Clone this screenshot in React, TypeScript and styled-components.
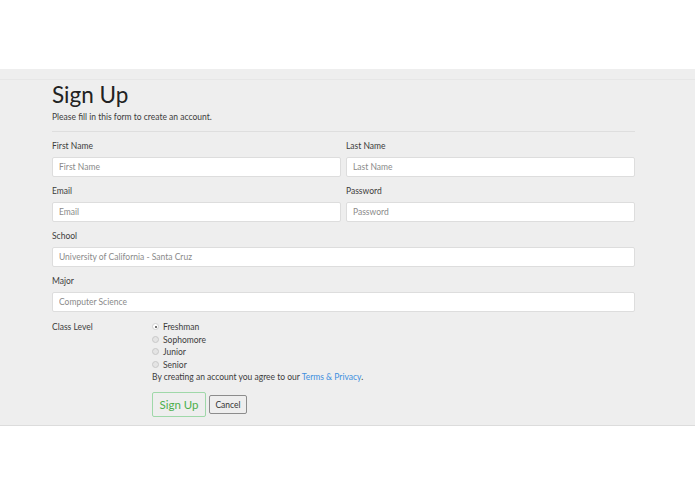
import React from "react";
import styled, { createGlobalStyle } from "styled-components";

const Global = createGlobalStyle`
  html, body { margin: 0; padding: 0; background: #fff; }
  body { font-family: Lato, "Open Sans", "Liberation Sans", sans-serif; color: #333; }
  * { box-sizing: border-box; }
`;

const Band = styled.section`
  margin-top: 69px;
  background: #eeeeee;
  padding-top: 10px;
  border-bottom: 1px solid #dcdcdc;
`;

const Inner = styled.div`
  border-top: 1px solid #e6e6e6;
  padding: 0 60px 8px 52px;
`;

const Form = styled.form`
  width: 583px;
  display: flex;
  flex-direction: column;
`;

const Title = styled.h1`
  margin: 0;
  font-size: 22.5px;
  font-weight: 400;
  line-height: 29px;
  color: #222;
`;

const Sub = styled.p`
  margin: 2px 0 0;
  font-size: 8.5px;
  line-height: 12px;
  color: #3c3c3c;
`;

const Rule = styled.hr`
  margin: 8px 0 9px;
  border: 0;
  border-top: 1px solid #dedede;
`;

const Row = styled.div`
  display: grid;
  grid-template-columns: 1fr 1fr;
  column-gap: 5px;
`;

const Group = styled.div`
  display: flex;
  flex-direction: column;
  margin-bottom: 9px;
`;

const Label = styled.label`
  font-size: 8.5px;
  line-height: 11px;
  color: #3c3c3c;
  margin-bottom: 5px;
`;

const Input = styled.input`
  height: 20px;
  border: 1px solid #dddddd;
  border-radius: 2px;
  background: #fff;
  padding: 0 6px;
  font-family: inherit;
  font-size: 8.5px;
  color: #555;
  outline: none;
  &::placeholder { color: #8a8a8a; }
`;

const LevelRow = styled.div`
  display: flex;
`;

const LevelLabel = styled.div`
  width: 100px;
  font-size: 8.5px;
  line-height: 12.5px;
  color: #3c3c3c;
`;

const Options = styled.div`
  display: flex;
  flex-direction: column;
`;

const Option = styled.label`
  display: flex;
  align-items: center;
  gap: 4px;
  font-size: 8.5px;
  line-height: 12.5px;
  color: #3c3c3c;
`;

const Radio = styled.input.attrs({ type: "radio" })`
  appearance: none;
  margin: 0 0 1px 0;
  width: 7px;
  height: 7px;
  border-radius: 50%;
  border: 1px solid #c8c8c8;
  background: #e4e4e4;
  position: relative;
  &:checked { background: #fff; border-color: #d0d0d0; }
  &:checked::after {
    content: "";
    position: absolute;
    left: 1.5px; top: 1.5px;
    width: 2px; height: 2px;
    border-radius: 50%;
    background: #444;
  }
`;

const Terms = styled.p`
  margin: 0;
  font-size: 8.5px;
  line-height: 13px;
  color: #3c3c3c;
`;

const Link = styled.a`
  color: #3d8fdf;
  text-decoration: none;
`;

const Buttons = styled.div`
  display: flex;
  align-items: center;
  gap: 3px;
  margin-top: 8px;
`;

const Button = styled.button<{ $primary?: boolean }>`
  font-family: inherit;
  background: transparent;
  cursor: pointer;
  border-radius: 2px;
  padding: 0;
  height: ${(p) => (p.$primary ? "25px" : "19px")};
  width: ${(p) => (p.$primary ? "54px" : "38px")};
  font-size: ${(p) => (p.$primary ? "11.5px" : "8.5px")};
  color: ${(p) => (p.$primary ? "#4cae4c" : "#333")};
  border: 1px solid ${(p) => (p.$primary ? "#9fd8a9" : "#8c8c8c")};
`;

export default function App() {
  return (
    <>
      <Global />
      <Band>
        <Inner>
          <Form onSubmit={(e) => e.preventDefault()}>
            <Title>Sign Up</Title>
            <Sub>Please fill in this form to create an account.</Sub>
            <Rule />
            <Row>
              <Group>
                <Label>First Name</Label>
                <Input placeholder="First Name" />
              </Group>
              <Group>
                <Label>Last Name</Label>
                <Input placeholder="Last Name" />
              </Group>
            </Row>
            <Row>
              <Group>
                <Label>Email</Label>
                <Input placeholder="Email" />
              </Group>
              <Group>
                <Label>Password</Label>
                <Input placeholder="Password" type="password" />
              </Group>
            </Row>
            <Group>
              <Label>School</Label>
              <Input placeholder="University of California - Santa Cruz" />
            </Group>
            <Group>
              <Label>Major</Label>
              <Input placeholder="Computer Science" />
            </Group>
            <LevelRow>
              <LevelLabel>Class Level</LevelLabel>
              <Options>
                <Option><Radio name="lvl" defaultChecked /> Freshman</Option>
                <Option><Radio name="lvl" /> Sophomore</Option>
                <Option><Radio name="lvl" /> Junior</Option>
                <Option><Radio name="lvl" /> Senior</Option>
                <Terms>
                  By creating an account you agree to our <Link href="#">Terms &amp; Privacy</Link>.
                </Terms>
                <Buttons>
                  <Button $primary type="submit">Sign Up</Button>
                  <Button type="button">Cancel</Button>
                </Buttons>
              </Options>
            </LevelRow>
          </Form>
        </Inner>
      </Band>
    </>
  );
}
